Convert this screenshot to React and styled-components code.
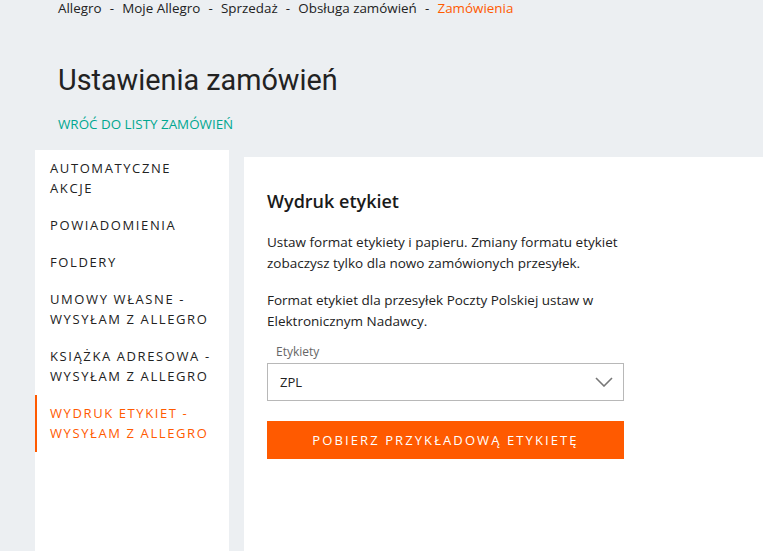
import React from 'react';
import styled, { createGlobalStyle } from 'styled-components';

const GlobalStyle = createGlobalStyle`
  html, body {
    margin: 0;
    padding: 0;
    background: #eceff2;
    font-family: 'Open Sans', 'Liberation Sans', sans-serif;
    color: #222;
    overflow: hidden;
  }
`;

const Page = styled.div`
  padding-left: 35px;
  width: 763px;
  box-sizing: border-box;
`;

const Header = styled.div`
  padding-left: 23px;
`;

const Breadcrumb = styled.div`
  font-size: 13.4px;
  line-height: 16px;
  display: flex;
  gap: 8.2px;
  white-space: nowrap;
`;

const Crumb = styled.span`
  color: ${({ $active }) => ($active ? '#ff5a00' : '#222')};
`;

const Title = styled.h1`
  margin: 46px 0 0;
  font-family: Roboto, 'Open Sans', sans-serif;
  font-weight: 400;
  font-size: 28.8px;
  line-height: 36px;
  color: #222;
`;

const BackLink = styled.a`
  display: block;
  margin-top: 17px;
  font-size: 13.4px;
  line-height: 18px;
  color: #00a790;
  text-decoration: none;
  text-transform: uppercase;
`;

const Body = styled.div`
  display: flex;
  gap: 15px;
  margin-top: 17px;
  align-items: flex-start;
`;

const Sidebar = styled.nav`
  width: 194px;
  flex-shrink: 0;
  background: #fff;
  min-height: 420px;
`;

const NavItem = styled.div`
  padding: 8px 15px 9px 13px;
  font-size: 13px;
  line-height: 20px;
  letter-spacing: 1.6px;
  text-transform: uppercase;
  color: ${({ $active }) => ($active ? '#ff5a00' : '#222')};
  border-left: 2px solid ${({ $active }) => ($active ? '#ff5a00' : 'transparent')};
`;

const Panel = styled.section`
  flex: 1;
  margin-top: 7px;
  background: #fff;
  min-height: 420px;
  padding: 32px 23px;
  margin-right: -20px;
`;

const PanelTitle = styled.h2`
  margin: 0;
  font-size: 18px;
  line-height: 24px;
  font-weight: 600;
  color: #1a1a1a;
`;

const Para = styled.p`
  margin: ${({ $first }) => ($first ? '19px' : '16px')} 0 0;
  font-size: 13.5px;
  line-height: 21px;
  width: 380px;
  color: #222;
`;

const Field = styled.div`
  margin-top: 12px;
  width: 357px;
`;

const Label = styled.div`
  font-size: 12px;
  line-height: 16px;
  color: #666;
  padding-left: 9px;
  margin-bottom: 3px;
`;

const Select = styled.div`
  height: 38px;
  box-sizing: border-box;
  border: 1px solid #b8b8b8;
  display: flex;
  align-items: center;
  justify-content: space-between;
  padding: 0 10px 0 12px;
  font-size: 13px;
  color: #222;
`;

const Button = styled.button`
  margin-top: 20px;
  width: 357px;
  height: 38px;
  border: none;
  background: #ff5a00;
  color: #fff;
  font-family: 'Open Sans', 'Liberation Sans', sans-serif;
  font-size: 13px;
  letter-spacing: 2.1px;
  text-transform: uppercase;
  cursor: pointer;
`;

const navItems = [
  'Automatyczne akcje',
  'Powiadomienia',
  'Foldery',
  'Umowy własne - wysyłam z Allegro',
  'Książka adresowa - wysyłam z Allegro',
  'Wydruk etykiet - wysyłam z Allegro',
];

function Chevron() {
  return (
    <svg width="18" height="10" viewBox="0 0 18 10" fill="none">
      <path d="M1 1l8 8 8-8" stroke="#777" strokeWidth="1.6" />
    </svg>
  );
}

export default function App() {
  const crumbs = ['Allegro', 'Moje Allegro', 'Sprzedaż', 'Obsługa zamówień', 'Zamówienia'];
  return (
    <>
      <GlobalStyle />
      <Page>
        <Header>
          <Breadcrumb>
            {crumbs.map((c, i) => (
              <React.Fragment key={c}>
                {i > 0 && <Crumb>-</Crumb>}
                <Crumb $active={i === crumbs.length - 1}>{c}</Crumb>
              </React.Fragment>
            ))}
          </Breadcrumb>
          <Title>Ustawienia zamówień</Title>
          <BackLink href="#">Wróć do listy zamówień</BackLink>
        </Header>
        <Body>
          <Sidebar>
            {navItems.map((item, i) => (
              <NavItem key={item} $active={i === navItems.length - 1}>
                {item}
              </NavItem>
            ))}
          </Sidebar>
          <Panel>
            <PanelTitle>Wydruk etykiet</PanelTitle>
            <Para $first>
              Ustaw format etykiety i papieru. Zmiany formatu etykiet zobaczysz tylko dla nowo
              zamówionych przesyłek.
            </Para>
            <Para>
              Format etykiet dla przesyłek Poczty Polskiej ustaw w Elektronicznym Nadawcy.
            </Para>
            <Field>
              <Label>Etykiety</Label>
              <Select>
                <span>ZPL</span>
                <Chevron />
              </Select>
            </Field>
            <Button>Pobierz przykładową etykietę</Button>
          </Panel>
        </Body>
      </Page>
    </>
  );
}
